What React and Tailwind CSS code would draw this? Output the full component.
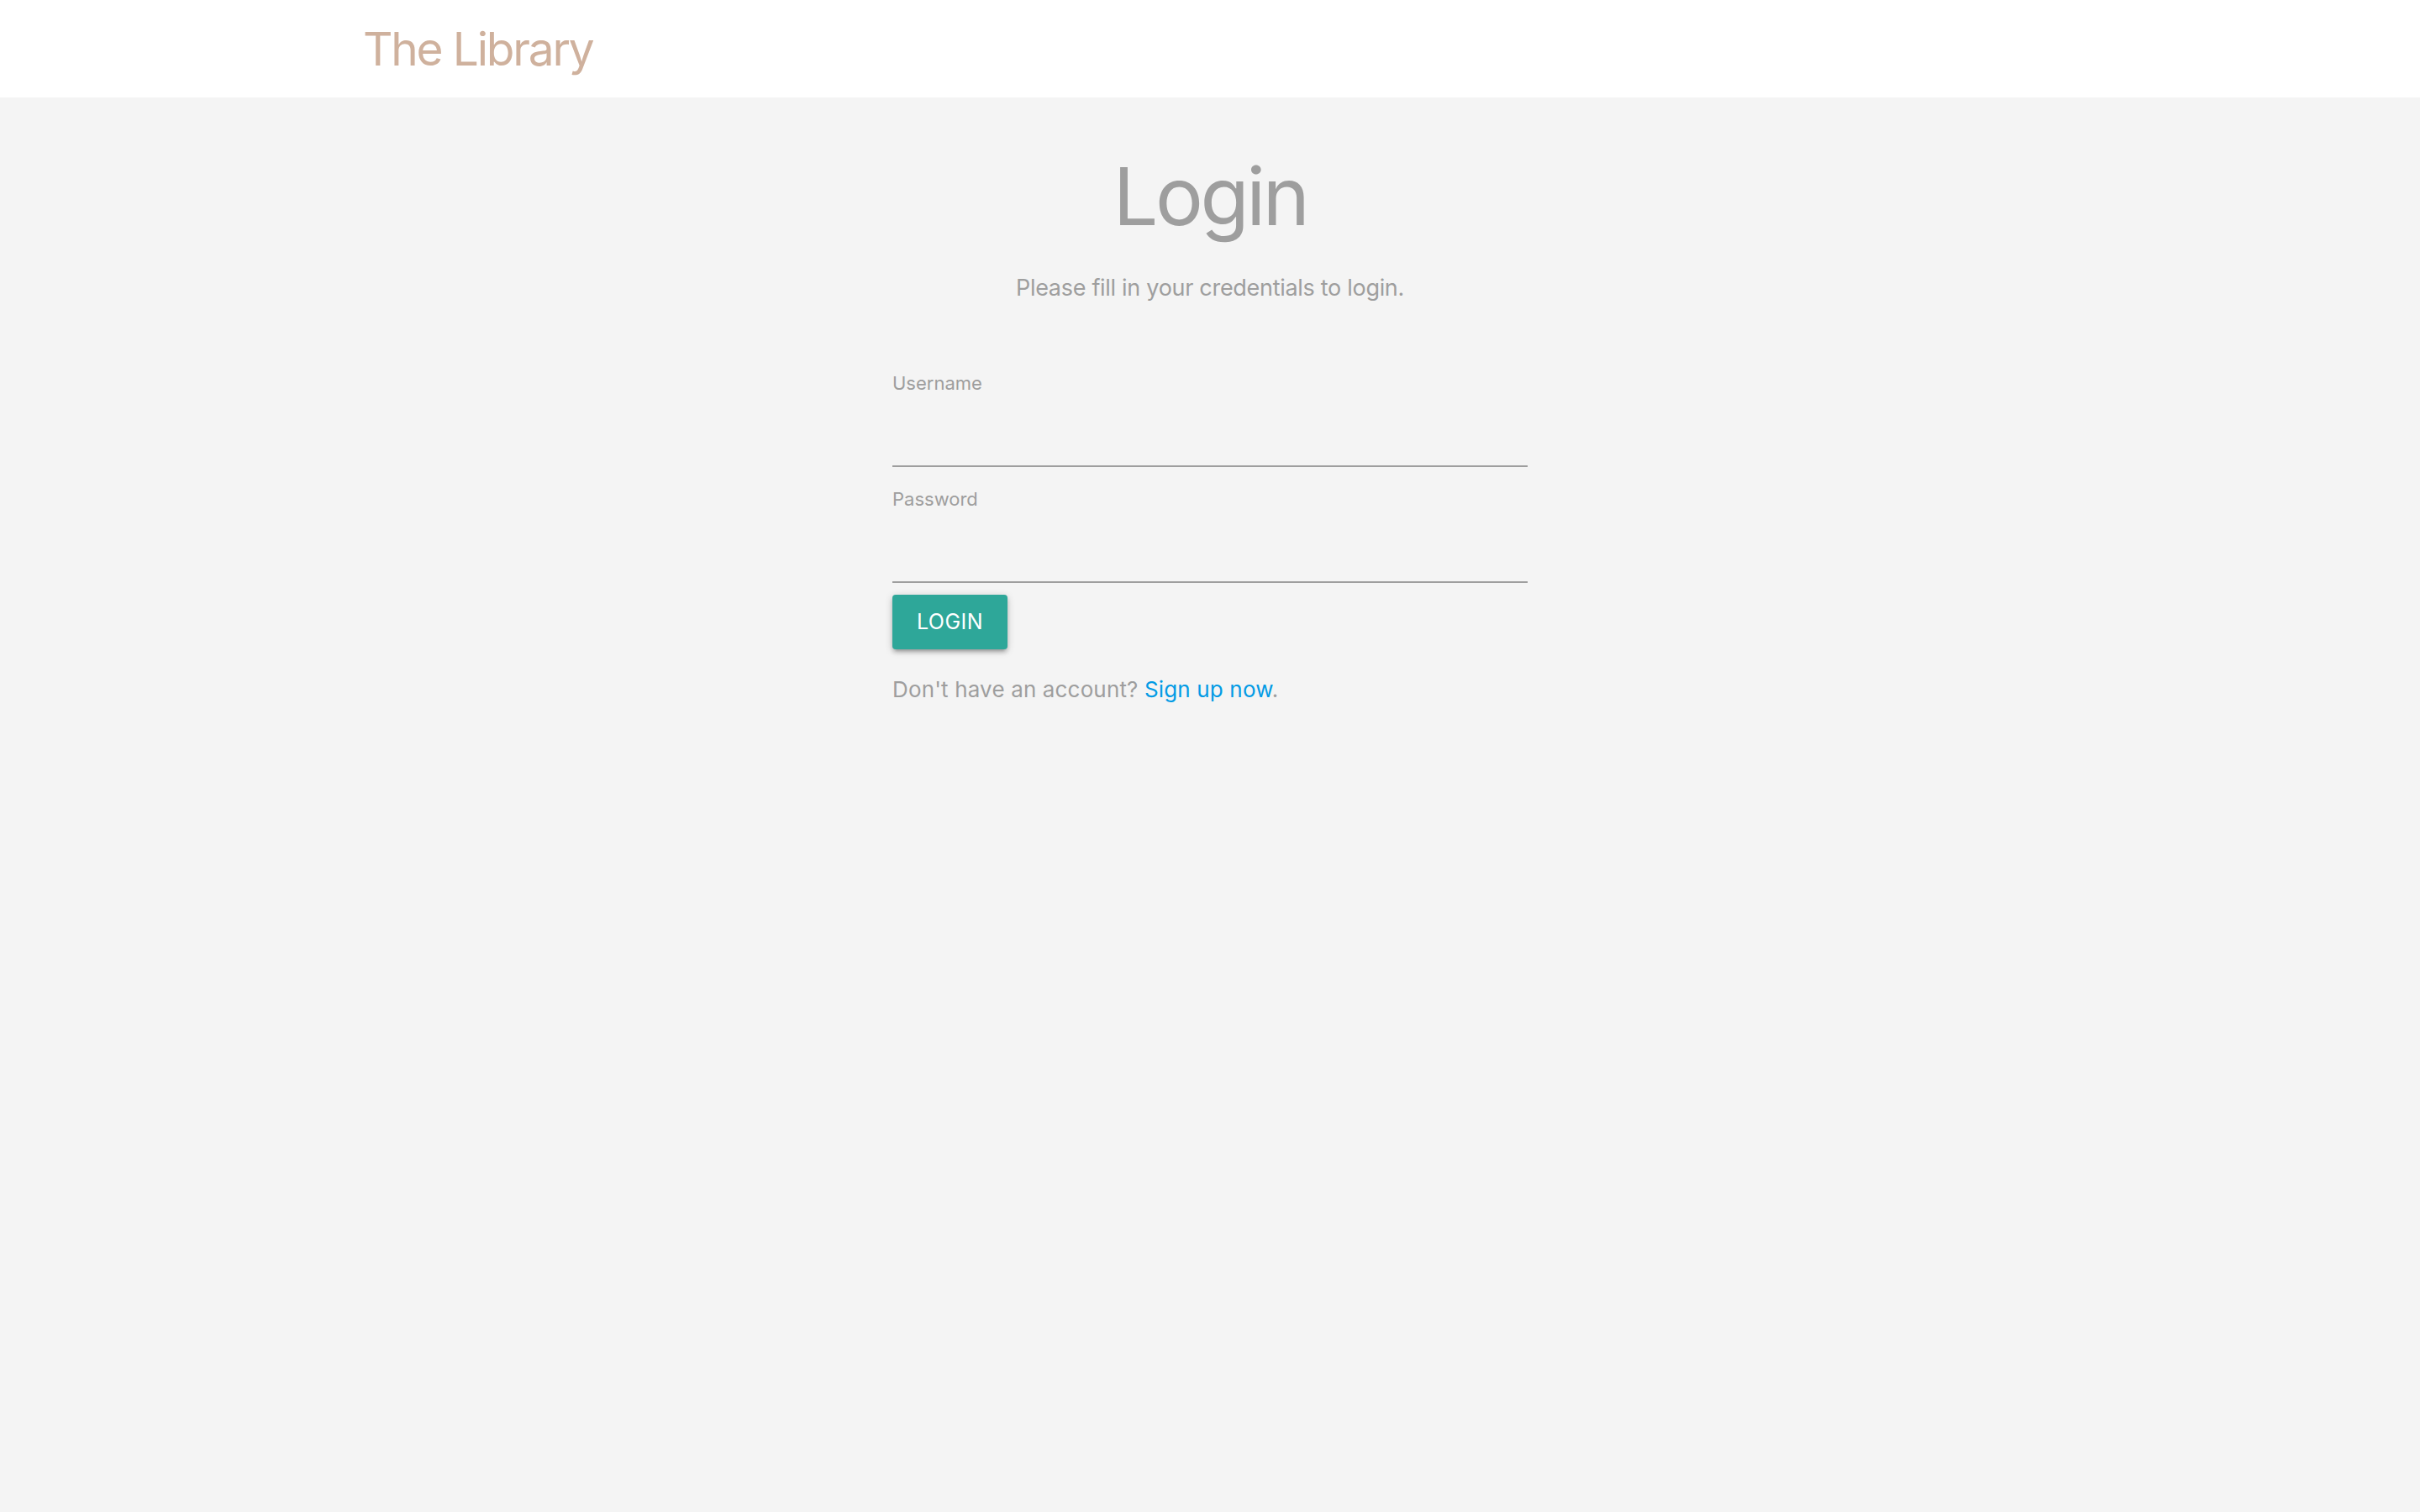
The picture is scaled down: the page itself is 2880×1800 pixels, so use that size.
export default function App() {
  const font = { fontFamily: 'Inter, "Noto Sans", sans-serif' };
  return (
    <div className="min-h-screen w-full bg-[#f4f4f4]" style={font}>
      <header className="h-[116px] w-full bg-white">
        <div className="mx-auto w-[70%] pt-[31px]">
          <a className="block text-[55px] leading-none tracking-[-2.2px] text-[#cfb19d]">The Library</a>
        </div>
      </header>
      <main className="mx-auto flex w-[756px] flex-col">
        <h1 className="mt-[70px] text-center text-[95px] leading-none font-normal tracking-[-3.5px] text-[#9e9e9e]">
          Login
        </h1>
        <p className="mt-[48px] text-center text-[27px] leading-none tracking-[-0.3px] text-[#9e9e9e]">
          Please fill in your credentials to login.
        </p>
        <form className="mt-[89px] flex flex-col">
          <label className="block text-[22px] leading-none text-[#9e9e9e]">Username</label>
          <input
            type="text"
            className="h-[89px] w-full border-0 border-b-2 border-[#9e9e9e] bg-transparent text-[27px] text-[#444] outline-none"
          />
          <label className="mt-[27px] block text-[22px] leading-none text-[#9e9e9e]">Password</label>
          <input
            type="password"
            className="h-[89px] w-full border-0 border-b-2 border-[#9e9e9e] bg-transparent text-[27px] text-[#444] outline-none"
          />
          <div className="mt-[14px] flex">
            <button
              type="button"
              className="flex h-[65px] w-[137px] items-center justify-center rounded-[4px] bg-[#2ea799] text-[25px] leading-none tracking-[0.5px] text-white shadow-[0_4px_4px_0_rgba(0,0,0,0.14),0_6px_2px_-4px_rgba(0,0,0,0.12),0_2px_10px_0_rgba(0,0,0,0.2)]"
            >
              LOGIN
            </button>
          </div>
          <p className="mt-[35px] text-[26px] leading-none tracking-[0.15px] text-[#9e9e9e]">
            Don't have an account? <a className="text-[#039be5]">Sign up now</a>.
          </p>
        </form>
      </main>
    </div>
  );
}
